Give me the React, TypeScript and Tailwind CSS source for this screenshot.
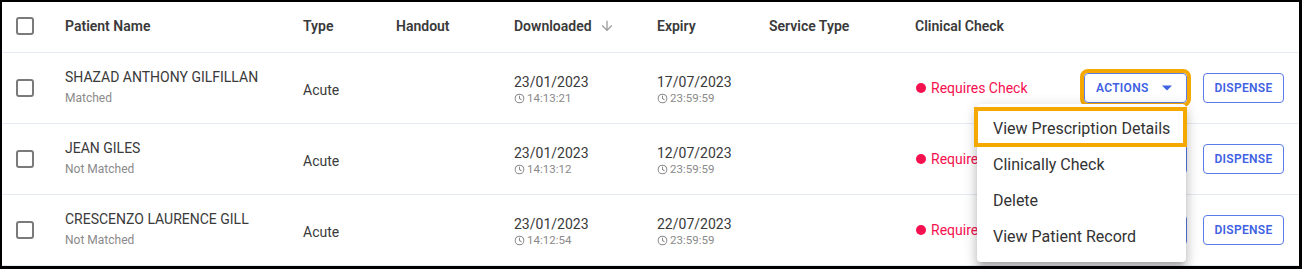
import React from 'react'

type Row = {
  name: string
  match: string
  type: string
  date: string
  time: string
  expiry: string
  expiryTime: string
}

const rows: Row[] = [
  { name: 'SHAZAD ANTHONY GILFILLAN', match: 'Matched', type: 'Acute', date: '23/01/2023', time: '14:13:21', expiry: '17/07/2023', expiryTime: '23:59:59' },
  { name: 'JEAN GILES', match: 'Not Matched', type: 'Acute', date: '23/01/2023', time: '14:13:12', expiry: '12/07/2023', expiryTime: '23:59:59' },
  { name: 'CRESCENZO LAURENCE GILL', match: 'Not Matched', type: 'Acute', date: '23/01/2023', time: '14:12:54', expiry: '22/07/2023', expiryTime: '23:59:59' },
]

const grid = 'grid grid-cols-[63px_238px_93px_118px_143px_112px_146px_1fr] items-center'

function Checkbox() {
  return <div className="ml-[14px] h-[18px] w-[18px] rounded-[3px] border-2 border-[#7a7a7a] bg-white" />
}

function Clock() {
  return (
    <svg width="11" height="11" viewBox="0 0 24 24" className="mr-[1px] shrink-0" fill="none" stroke="#8a8a8a" strokeWidth="2.2">
      <circle cx="12" cy="12" r="9.5" />
      <path d="M12 6.5V12l3.6 2.4" strokeLinecap="round" />
    </svg>
  )
}

function DateCell({ date, time }: { date: string; time: string }) {
  return (
    <div className="flex flex-col pt-[3px]">
      <span className="text-[14px] leading-[17px] text-[#3a3a3a]">{date}</span>
      <span className="flex items-center gap-[1px] text-[11.5px] leading-[15px] text-[#8a8a8a]">
        <Clock />
        {time}
      </span>
    </div>
  )
}

function Menu() {
  const items = ['View Prescription Details', 'Clinically Check', 'Delete', 'View Patient Record']
  return (
    <div className="absolute right-[1px] top-[calc(100%+1px)] z-20 w-[209px] rounded-[4px] bg-white py-[7px] shadow-[0_5px_5px_-3px_rgba(0,0,0,0.2),0_8px_10px_1px_rgba(0,0,0,0.14),0_3px_14px_2px_rgba(0,0,0,0.12)]">
      {items.map((item, i) => (
        <div key={item} className="relative flex h-[36px] items-center whitespace-nowrap px-[16px] text-[16px] text-[#333]">
          {i === 0 && (
            <span className="pointer-events-none absolute -left-[3px] -right-[1px] -top-[4px] bottom-0 border-4 border-[#f5a800]" />
          )}
          {item}
        </div>
      ))}
    </div>
  )
}

export default function App() {
  return (
    <div
      className="h-[269px] w-[1302px] overflow-hidden border-b-[3px] border-l-2 border-r-[3px] border-t-2 border-black bg-white"
      style={{ fontFamily: 'Roboto, "Liberation Sans", sans-serif' }}
    >
      <div className={`${grid} h-[51px] border-b border-[#e6ebf3] pb-[2px] text-[14px] font-semibold text-[#3a3a3a]`}>
        <Checkbox />
        <span>Patient Name</span>
        <span>Type</span>
        <span>Handout</span>
        <span className="flex items-center">
          Downloaded
          <svg width="16" height="16" viewBox="0 0 24 24" className="ml-[7px]" fill="#9e9e9e">
            <path d="M20 12l-1.41-1.41L13 16.17V4h-2v12.17l-5.58-5.59L4 12l8 8 8-8z" />
          </svg>
        </span>
        <span>Expiry</span>
        <span>Service Type</span>
        <span>Clinical Check</span>
      </div>

      {rows.map((r, i) => (
        <div key={r.name} className={`${grid} h-[71px] border-b border-[#e6ebf3]`}>
          <Checkbox />
          <div className="flex flex-col pb-[2px]">
            <span className="mb-[2px] text-[14px] leading-[20px] text-[#3a3a3a]">{r.name}</span>
            <span className="text-[12px] leading-[18px] text-[#8a8a8a]">{r.match}</span>
          </div>
          <span className="pt-[4px] text-[14px] text-[#3a3a3a]">{r.type}</span>
          <span />
          <DateCell date={r.date} time={r.time} />
          <DateCell date={r.expiry} time={r.expiryTime} />
          <span />
          <div className="flex items-center justify-between pr-[15px]">
            <span className="flex items-center text-[14px] text-[#f5104f]">
              <span className="mr-[5px] ml-[1px] h-[10px] w-[10px] rounded-full bg-[#f5104f]" />
              Requires Check
            </span>
            <div className="flex items-center gap-[16px]">
              <div className="relative">
                <button
                  className={`flex h-[30px] w-[103px] items-center rounded-[4px] border border-[#5b7be6] pl-[11px] text-[12px] font-semibold tracking-[0.3px] text-[#3f62e3] ${
                    i === 0 ? 'outline-4 outline-[#f5a800]' : ''
                  }`}
                >
                  ACTIONS
                  <svg width="10" height="6" viewBox="0 0 10 5" className="ml-[13px]" fill="#3f62e3">
                    <path d="M0 0h10L5 5z" />
                  </svg>
                </button>
                {i === 0 && <Menu />}
              </div>
              <button className="flex h-[30px] w-[81px] items-center justify-center rounded-[4px] border border-[#5b7be6] text-[12px] font-semibold tracking-[0.3px] text-[#3f62e3]">
                DISPENSE
              </button>
            </div>
          </div>
        </div>
      ))}
    </div>
  )
}
